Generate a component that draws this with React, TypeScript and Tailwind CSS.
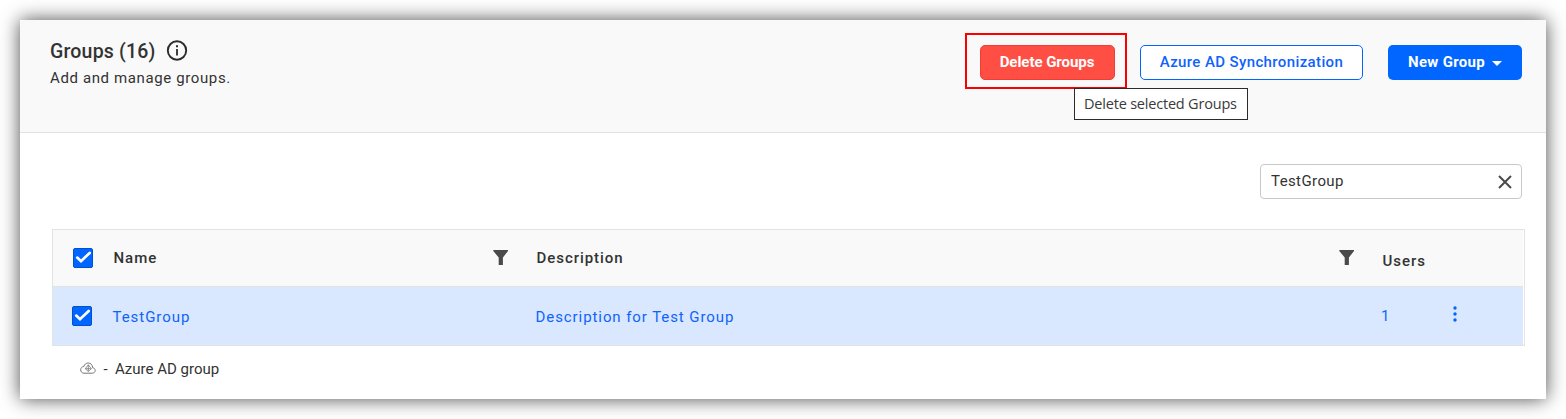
import React from "react";

function Checkbox() {
  return (
    <span className="flex h-5 w-5 shrink-0 items-center justify-center rounded-[2px] border border-[#0052cc] bg-[#0066ff]">
      <svg width="18" height="18" viewBox="0 0 18 18" fill="none">
        <path d="M3.2 8.6 7 12.2 15.7 3.9" stroke="#fff" strokeWidth="2.7" strokeLinecap="round" />
      </svg>
    </span>
  );
}

function Filter() {
  return (
    <svg className="-mt-px shrink-0" width="15" height="15" viewBox="0 0 15 15" fill="#4a4a4a">
      <path d="M0.3 0H15V1L9.9 7.5V15H5.7V7.5L0.3 1Z" />
    </svg>
  );
}

function InfoIcon() {
  return (
    <svg width="22" height="22" viewBox="0 0 22 22" fill="none">
      <circle cx="11" cy="10.5" r="9.2" stroke="#2b2b2b" strokeWidth="1.9" />
      <path d="M11 9V15.5" stroke="#2b2b2b" strokeWidth="1.8" />
      <path d="M11 5.3V7.3" stroke="#2b2b2b" strokeWidth="2" />
    </svg>
  );
}

function CloudIcon() {
  return (
    <svg width="16" height="13" viewBox="0 0 16 13" fill="none" stroke="#777" strokeWidth="1">
      <path d="M4 11.2H12.2C14 11.2 15.2 10 15.2 8.4 15.2 6.9 14 5.8 12.6 5.7 12.6 2.9 10.7 1 8.2 1 6.1 1 4.4 2.3 3.9 4.4 2 4.5.7 6 .7 7.8.7 9.8 2.1 11.2 4 11.2Z" />
      <path d="M8.3 2.8 11.3 6.7 8.3 9.4 5.3 6.7ZM8.3 2.8V9.4M5.3 6.7H11.3" strokeWidth=".8" />
    </svg>
  );
}

export default function App() {
  return (
    <div className="h-[419px] w-[1566px] bg-white p-5 font-[Roboto,sans-serif] text-[15px] leading-5 text-[#333]">
      <main className="h-[379px] w-[1526px] bg-white shadow-[0_0_18px_rgba(0,0,0,0.7)]">
        <header className="flex h-[113px] justify-between border-b border-[#e1e1e1] bg-[#f9f9f9] pr-6 pl-[30px]">
          <div className="pt-[19px]">
            <div className="flex h-[23px] items-center">
              <h1 className="mt-[2px] w-[116px] text-[19.5px] font-medium tracking-[0.2px] whitespace-nowrap">Groups (16)</h1>
              <InfoIcon />
            </div>
            <p className="mt-[6px] tracking-[0.62px]">Add and manage groups.</p>
          </div>
          <div className="flex items-start pt-[13px]">
            <div className="relative mr-[13px] h-[56px] w-[162px] border-2 border-[#fa0000] p-[10px] pl-[13px]">
              <button className="h-[35px] w-[135px] rounded-[5px] border border-[#f23d34] bg-[#ff4f45] pr-px pb-[2px] font-bold tracking-[-0.05px] whitespace-nowrap text-white">
                Delete Groups
              </button>
              <div className="absolute top-[53px] left-[107px] h-8 w-[174px] border border-[#2b2b2b] bg-white pl-[9px] font-['Open_Sans',sans-serif] text-[14.5px] leading-[29px] tracking-[-0.2px] whitespace-nowrap text-[#3a3a3a]">
                Delete selected Groups
              </div>
            </div>
            <button className="mt-3 mr-[25px] h-[35px] w-[223px] rounded-[5px] border border-[#0066ff] bg-white pb-[2px] font-medium tracking-[0.38px] whitespace-nowrap text-[#0f63fb]">
              Azure AD Synchronization
            </button>
            <button className="mt-3 flex h-[35px] w-[134px] items-center rounded-[5px] bg-[#0066ff] pl-5 font-bold whitespace-nowrap text-white">
              <span className="-mt-[2px] w-[84px] text-left tracking-[0.3px]">New Group</span>
              <svg className="mt-[2px]" width="10" height="5" viewBox="0 0 10 5" fill="#fff">
                <path d="M0 0H10L5 5Z" />
              </svg>
            </button>
          </div>
        </header>

        <div className="flex h-[96px] justify-end pt-[31px] pr-6">
          <div className="flex h-[35px] w-[262px] items-center justify-between rounded-[4px] border border-[#c9c9c9] pr-[9px] pl-[10px]">
            <span className="-mt-[2px] tracking-[0.4px]">TestGroup</span>
            <svg className="mt-px" width="14" height="14" viewBox="0 0 14 14" stroke="#4a4a4a" strokeWidth="2">
              <path d="M1 1 13 13M13 1 1 13" />
            </svg>
          </div>
        </div>

        <section className="ml-8 h-[117px] w-[1473px] border border-[#e3e3e3] pr-px">
          <div className="flex h-[57px] items-center border-b border-[#e3e3e3] bg-[#f9f9f9] pl-5 font-medium tracking-[0.95px]">
            <Checkbox />
            <span className="ml-[20.5px] w-[379.5px]">Name</span>
            <Filter />
            <span className="ml-[28.5px] w-[802.5px]">Description</span>
            <Filter />
            <span className="mt-[5px] ml-[28.5px]">Users</span>
          </div>
          <div className="flex h-[58px] items-center bg-[#d9e7ff] pl-[19px] tracking-[0.95px] text-[#0f63fb]">
            <Checkbox />
            <span className="mt-px ml-[20.5px] w-[423px]">TestGroup</span>
            <span className="mt-px w-[845.5px] tracking-[0.92px]">Description for Test Group</span>
            <span className="w-[71px]">1</span>
            <svg className="-mt-1" width="6" height="18" viewBox="0 0 6 18" fill="#0066ff">
              <circle cx="3" cy="3" r="1.7" />
              <circle cx="3" cy="9" r="1.7" />
              <circle cx="3" cy="15" r="1.7" />
            </svg>
          </div>
        </section>

        <footer className="flex h-[45px] items-center pl-[60px]">
          <CloudIcon />
          <span className="ml-[7.5px] w-[11.5px]">-</span>
          <span>Azure AD group</span>
        </footer>
      </main>
    </div>
  );
}
